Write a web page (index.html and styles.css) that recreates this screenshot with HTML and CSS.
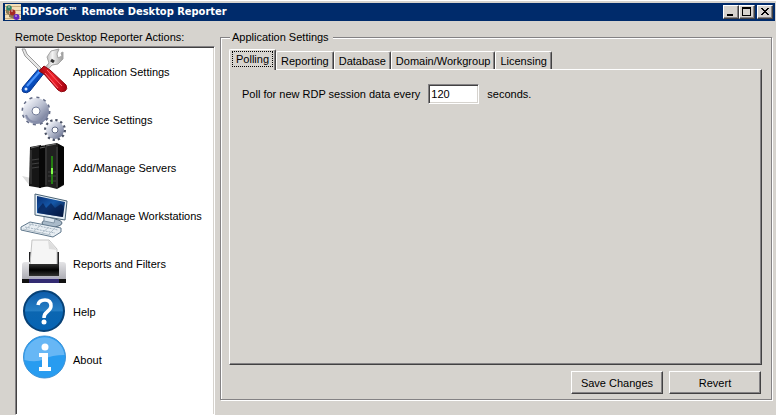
FILE: index.html
```html
<!DOCTYPE html>
<html lang="en">
<head>
<meta charset="utf-8">
<title>RDPSoft™ Remote Desktop Reporter</title>
<link rel="stylesheet" href="styles.css">
</head>
<body>
<div class="window">
  <header class="titlebar">
    <svg class="app-icon" viewBox="0 0 16 16" aria-hidden="true">
      <rect width="16" height="16" fill="#f3dfb8"/>
      <path d="M0 2.5h16M0 6.5h16M0 10.5h16M0 14.5h16" stroke="#c9ab7c"/>
      <path d="M1 5l3 2v4l-3-2zM4 10l5 1v4l-5-2z" fill="#8a7a55"/>
      <circle cx="4" cy="4" r="2.800" fill="#2f8568"/>
      <circle cx="7.500" cy="8.500" r="3" fill="#a42a25"/>
      <circle cx="11.500" cy="13" r="3" fill="#6424c4"/>
      <path d="M3 3h2M6 7h2M10 12h2" stroke="#d8c8c0"/>
    </svg>
    <h1 class="title">RDPSoft™ Remote Desktop Reporter</h1>
    <div class="caption-buttons">
      <button class="caption" type="button" aria-label="Minimize"><svg viewBox="0 0 12 10"><path d="M2 7h6v2H2z"/></svg></button>
      <button class="caption" type="button" aria-label="Maximize"><svg viewBox="0 0 12 10"><path d="M1 0h9v9H1zM2 2v6h7V2z" fill-rule="evenodd"/></svg></button>
      <button class="caption close" type="button" aria-label="Close"><svg viewBox="0 0 12 10"><path d="M2 1h2v1h1v1h2V2h1V1h2v1H9v1H8v1H7v1h1v1h1v1h1v1H8V7H7V6H5v1H4v1H2V7h1V6h1V5h1V4H4V3H3V2H2z"/></svg></button>
    </div>
  </header>
  <main class="content">
    <nav class="actions" aria-labelledby="actions-label">
      <h2 class="actions-label" id="actions-label">Remote Desktop Reporter Actions:</h2>
      <ul class="action-list">
        <li><a class="action" href="#app">
          <svg class="icon" viewBox="0 0 48 48" aria-hidden="true">
            <defs>
              <linearGradient id="steel"><stop stop-color="#8b8b8b"/><stop offset=".5" stop-color="#f4f4f4"/><stop offset="1" stop-color="#999"/></linearGradient>
              <linearGradient id="blue" x2="1" y2="1"><stop stop-color="#1767e0"/><stop offset=".5" stop-color="#0952c5"/><stop offset="1" stop-color="#031f70"/></linearGradient>
              <linearGradient id="red" x2="1" y2="0"><stop stop-color="#a80812"/><stop offset=".5" stop-color="#f02028"/><stop offset="1" stop-color="#a00010"/></linearGradient>
            </defs>
            <path d="M20 23l7-8-2-6 4-6 8-2-2 5 1 4 4-2-1-3 2-1 0 7-5 5-6 1-9 10z" fill="url(#steel)" stroke="#a5a5a5"/>
            <path d="M29 12l3 2" stroke="#333" stroke-width="3"/>
            <path d="M1 39l17-20 5 5L8 43q-3 3-7 1-2-2 0-5z" fill="url(#blue)" stroke="#06358f"/>
            <path d="M5 38l14-16" stroke="#4d95fa" stroke-width="2"/>
            <circle cx="4" cy="41" r="1.500" fill="#dce8ff"/>
            <path d="M0 1l3 0 2 5 14 14-2 2L3 8z" fill="#e6e6e6" stroke="#9b9b9b"/>
            <path d="M17 23l5-5 6 4 16 15q2 4-1 6-4 2-7-1L22 26z" fill="url(#red)" stroke="#8f0810"/>
            <path d="M25 22l15 16M23 25l13 15" stroke="#ff6570"/>
          </svg><span>Application Settings</span></a></li>
        <li><a class="action" href="#service">
          <svg class="icon" viewBox="0 0 48 48" aria-hidden="true">
            <defs><linearGradient id="gear" x2="1" y2="1"><stop stop-color="#eceef5"/><stop offset=".5" stop-color="#b7bdcf"/><stop offset="1" stop-color="#777f9c"/></linearGradient></defs>
            <circle cx="14" cy="15" r="12.500" fill="none" stroke="#636b86" stroke-width="4" stroke-dasharray="2.800 3.745"/>
            <circle cx="14" cy="15" r="8.500" fill="none" stroke="url(#gear)" stroke-width="9"/>
            <circle cx="14" cy="15" r="4" fill="#fff" stroke="#737c98"/>
            <path d="M4 19q2 7 10 7t10-7" fill="none" stroke="#878eaa" stroke-width="2"/>
            <circle cx="33" cy="34" r="9.500" fill="none" stroke="#4b5265" stroke-width="3" stroke-dasharray="2.200 2.774"/>
            <circle cx="33" cy="34" r="6" fill="none" stroke="url(#gear)" stroke-width="6"/>
            <circle cx="33" cy="34" r="3" fill="#fff" stroke="#606983"/>
          </svg><span>Service Settings</span></a></li>
        <li><a class="action" href="#servers">
          <svg class="icon" viewBox="0 0 48 48" aria-hidden="true">
            <path d="M0 32l9 2 15 9-16-1z" fill="#dcdcdc"/>
            <path d="M8 3l11-2v43L7 42z" fill="#161616"/>
            <path d="M17 2l10-1v41l-10 2z" fill="#080808"/>
            <path d="M23 1l12-2 7 4v38l-7 4-12-3z" fill="#202020"/>
            <path d="M36 0l6 3v37l-6 4z" fill="#050505"/>
            <path d="M24 2l10-2M9 4l8-2M18 4l5-1" stroke="#686868"/>
            <path d="M24 3v38M35 3v40M9 6v34" stroke="#454545"/>
            <path d="M10 16l7-1M10 20l7-1M10 24l7-1M26 28h8M26 32h8M26 37h8" stroke="#414141"/>
            <path d="M30 12v28" stroke="#257d12" stroke-width="2"/>
            <path d="M30 24v6" stroke="#81ff4a" stroke-width="2"/>
          </svg><span>Add/Manage Servers</span></a></li>
        <li><a class="action" href="#workstations">
          <svg class="icon" viewBox="0 0 48 48" aria-hidden="true">
            <defs><linearGradient id="screen" x2="1" y2="1"><stop stop-color="#092f74"/><stop offset=".45" stop-color="#1558a9"/><stop offset="1" stop-color="#020c29"/></linearGradient></defs>
            <ellipse cx="30" cy="31" rx="10" ry="4" fill="#a9bac9" stroke="#53687c"/>
            <path d="M22 24l11 3-1 4-10-2z" fill="#d9e4ed" stroke="#8295a6"/>
            <path d="M13 2l32 7-2 19-30-5z" fill="#e3edf5" stroke="#486174"/>
            <path d="M15 4l28 6-2 15-26-4z" fill="url(#screen)"/>
            <path d="M16 17l5-6 3 5 5-5 4 5 6-4 2 2-1 11-24-4z" fill="#061c4b" opacity=".65"/>
            <path d="M-1 35l9-5 31 6v4l-8 5-32-7z" fill="#e8eef3" stroke="#60788c"/>
            <path d="M3 35l30 6M7 32l29 6" stroke="#a5b5c3" stroke-dasharray="2 1"/>
            <path d="M1 37l28 6M11 31l-7 6M19 33l-7 6M27 35l-7 6M33 36l-6 6" stroke="#b5c2cc"/>
          </svg><span>Add/Manage Workstations</span></a></li>
        <li><a class="action" href="#reports">
          <svg class="icon" viewBox="0 0 48 48" aria-hidden="true">
            <defs><linearGradient id="printer" x2="0" y2="1"><stop stop-color="#e4e4e6"/><stop offset="1" stop-color="#aaaab2"/></linearGradient>
            <linearGradient id="tray" x2="0" y2="1"><stop stop-color="#333"/><stop offset=".5"/><stop offset="1" stop-color="#333"/></linearGradient></defs>
            <path d="M7 12h30v13H7z" fill="#202023"/>
            <path d="M10 0h17l8 9v16H8z" fill="#f5f5f5" stroke="#c5c5c5"/>
            <path d="M26 0l1 9 8 1z" fill="#ddd"/>
            <path d="M0 25q0-3 3-3h5v3h29v-3h4q3 0 3 3v15H0z" fill="url(#printer)"/>
            <path d="M7 24h30v12H7z" fill="url(#tray)"/>
            <path d="M0 39h44v4H0z" fill="#111"/>
            <path d="M7 39h30v4H7z" fill="#332b72"/>
            <path d="M8 38h28" stroke="#aaa7ce"/>
          </svg><span>Reports and Filters</span></a></li>
        <li><a class="action" href="#help">
          <svg class="icon" viewBox="0 0 48 48" aria-hidden="true">
            <defs><linearGradient id="help" x2="0" y2="1"><stop stop-color="#0d5baa"/><stop offset=".5" stop-color="#267fc5"/><stop offset=".52" stop-color="#0b66b1"/><stop offset="1" stop-color="#0563b3"/></linearGradient></defs>
            <circle cx="22" cy="23" r="20" fill="url(#help)" stroke="#074176" stroke-width="2"/>
            <path d="M16 17q1-5 7-5 6 0 6 6 0 3-4 6-3 2-3 6" fill="none" stroke="#fff" stroke-width="3.500"/>
            <circle cx="22" cy="34" r="2.500" fill="#fff"/>
          </svg><span>Help</span></a></li>
        <li><a class="action" href="#about">
          <svg class="icon" viewBox="0 0 48 48" aria-hidden="true">
            <circle cx="22.500" cy="21" r="21" fill="#289cf0" stroke="#3c91d6"/>
            <path d="M2.500 24a20 20 0 0 1 40-5q-13 0-20 4-8 4-20 1z" fill="#67b7f5"/>
            <circle cx="23" cy="11" r="3.500" fill="#fff"/>
            <path d="M17 17h9v14h3v4H17v-4h3V21h-3z" fill="#fff"/>
          </svg><span>About</span></a></li>
      </ul>
    </nav>
    <form class="settings">
      <fieldset class="group">
        <legend class="legend">Application Settings</legend>
        <div class="tabs" role="tablist">
          <button class="tab active" type="button" role="tab" aria-selected="true"><span class="focus">Polling</span></button>
          <button class="tab" type="button" role="tab">Reporting</button>
          <button class="tab" type="button" role="tab">Database</button>
          <button class="tab" type="button" role="tab">Domain/Workgroup</button>
          <button class="tab" type="button" role="tab">Licensing</button>
        </div>
        <div class="panel" role="tabpanel">
          <div class="poll">
            <label for="interval">Poll for new RDP session data every</label>
            <input class="interval" id="interval" type="text" value="120">
            <span>seconds.</span>
          </div>
        </div>
        <div class="buttons">
          <button class="push" type="button">Save Changes</button>
          <button class="push" type="button">Revert</button>
        </div>
      </fieldset>
    </form>
  </main>
</div>
</body>
</html>
```
FILE: styles.css
```css
* {
  box-sizing: border-box;
}

body {
  margin: 0;
  background: #d6d3ce;
  color: #000;
  font: 11px/14px "Liberation Sans", Arial, sans-serif;
}

button,
input {
  margin: 0;
  padding: 0;
  border-radius: 0;
  color: inherit;
  font: inherit;
}

.window {
  display: flex;
  flex-direction: column;
  height: 100vh;
  padding: 2px 1px 0 3px;
  overflow: hidden;
  border-top: 1px solid #fff;
}

.titlebar {
  display: flex;
  flex: none;
  align-items: center;
  height: 18px;
  padding: 0 2px;
  background: #002b6b;
  color: #fff;
}

.app-icon {
  flex: none;
  width: 16px;
  height: 16px;
}

.title {
  flex: 1;
  margin: 0 0 0 1px;
  font: bold 11px/14px "DejaVu Sans Condensed", "DejaVu Sans", sans-serif;
  white-space: nowrap;
}

.caption-buttons {
  display: flex;
}

.caption {
  width: 16px;
  height: 14px;
  border: 1px solid;
  border-color: #fff #424142 #424142 #fff;
  background: #d6d3ce;
  box-shadow: inset -1px -1px #848284;
}

.caption.close {
  margin-left: 2px;
}

.caption svg {
  display: block;
  width: 12px;
  height: 10px;
  margin: 0 1px;
  shape-rendering: crispEdges;
}

.content {
  display: flex;
  flex: 1;
  min-height: 0;
  padding: 9px 3px 0 12px;
}

.actions {
  display: flex;
  flex: none;
  flex-direction: column;
  width: 200px;
  margin-right: 5px;
}

.actions-label {
  margin: 0 0 2px;
  font-size: 11px;
  font-weight: normal;
  line-height: 14px;
}

.action-list {
  flex: 1;
  min-height: 0;
  margin: 0;
  padding: 1px 4px 0 6px;
  overflow: hidden;
  border: 1px solid;
  border-color: #848284 #fff #fff #848284;
  background: #fff;
  box-shadow: inset 1px 1px #424142, inset -1px 0 #d6d3ce;
  list-style: none;
}

.action {
  display: flex;
  align-items: center;
  gap: 3px;
  height: 48px;
  color: #000;
  text-decoration: none;
}

.icon {
  flex: none;
  width: 48px;
  height: 48px;
  overflow: visible;
}

.settings {
  display: flex;
  flex: 1;
  min-width: 0;
  padding-bottom: 15px;
}

.group {
  display: flex;
  flex: 1;
  flex-direction: column;
  min-width: 0;
  margin: 0;
  padding: 5px 9px 5px 8px;
  border: 1px solid #848284;
  box-shadow: 1px 1px #fff, inset 1px 1px #fff;
}

.legend {
  margin-left: 1px;
  padding: 0 4px 0 2px;
  background: #d6d3ce;
}

.tabs {
  display: flex;
  align-items: flex-end;
  height: 20px;
}

.tab {
  height: 18px;
  padding: 0 4px;
  border: 1px solid;
  border-color: #fff #424142 transparent #fff;
  border-bottom: 0;
  border-radius: 2px 2px 0 0;
  background: #d6d3ce;
  box-shadow: inset -1px 0 #848284;
}

.tab.active {
  z-index: 1;
  height: 21px;
  margin-bottom: -1px;
  padding: 0 2px 3px;
}

.focus {
  display: block;
  padding: 0 3px;
  border: 1px dotted #000;
}

.panel {
  flex: 1;
  padding: 14px 12px;
  border: 1px solid;
  border-color: #fff #424142 #424142 #fff;
  box-shadow: inset -1px -1px #848284;
}

.poll {
  display: flex;
  align-items: center;
  gap: 8px;
}

.interval {
  width: 51px;
  height: 20px;
  padding: 0 2px;
  border: 1px solid;
  border-color: #848284 #fff #fff #848284;
  background: #fff;
  box-shadow: inset 1px 1px #424142, inset -1px -1px #d6d3ce;
  outline: 0;
}

.buttons {
  display: flex;
  justify-content: flex-end;
  gap: 6px;
  margin-top: 6px;
  padding-right: 1px;
}

.push {
  width: 92px;
  height: 23px;
  border: 1px solid;
  border-color: #fff #424142 #424142 #fff;
  background: #d6d3ce;
  box-shadow: inset -1px -1px #848284;
}
```
